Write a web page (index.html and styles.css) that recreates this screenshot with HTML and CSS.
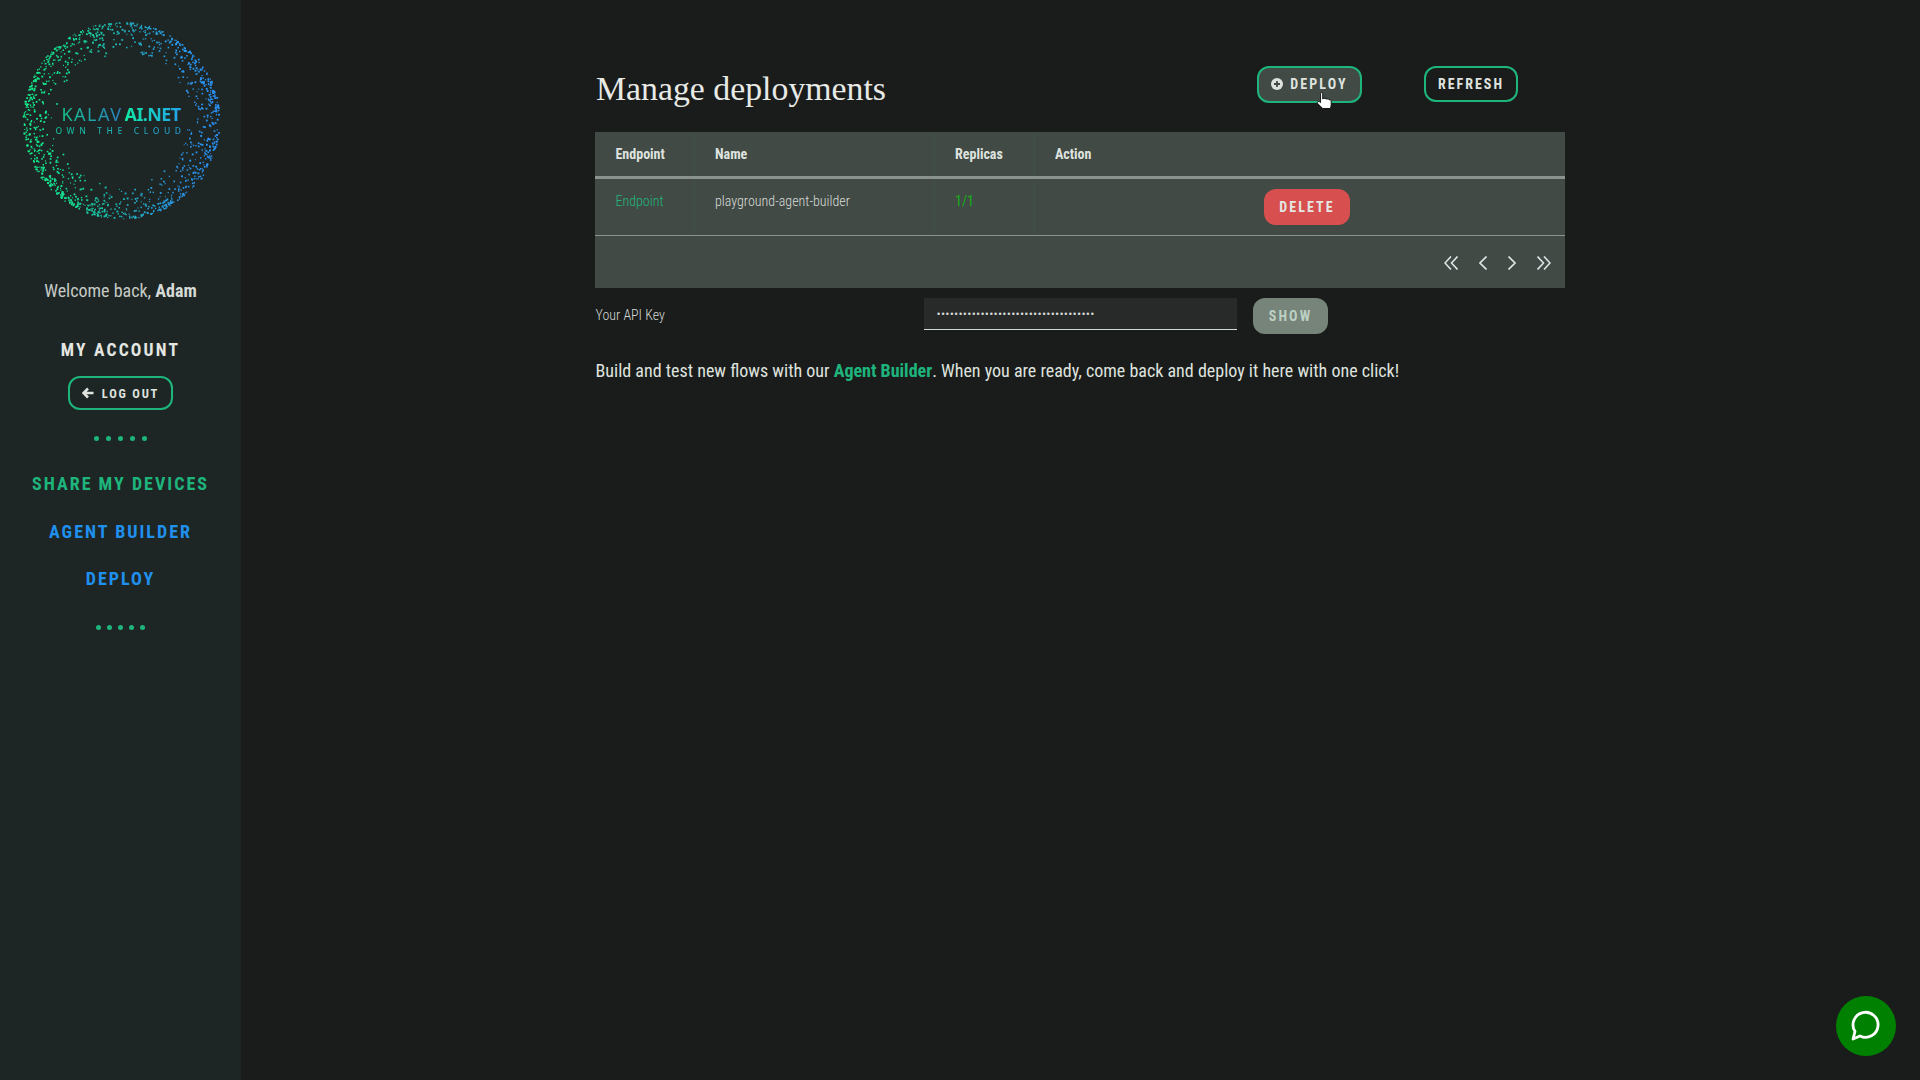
FILE: index.html
```html
<!DOCTYPE html>
<html lang="en">
<head>
<meta charset="utf-8">
<title>Manage deployments</title>
<link rel="stylesheet" href="styles.css">
</head>
<body>
<div class="app">
  <aside class="sidebar">
    <div class="logo">
      <svg id="ring" class="ring" viewBox="0 0 200 200" width="200" height="200" aria-hidden="true">
        <defs>
          <linearGradient id="ringGrad" gradientUnits="userSpaceOnUse" x1="5" y1="100" x2="195" y2="100">
            <stop offset="0" stop-color="#12f08c"/>
            <stop offset="0.25" stop-color="#14dc94"/>
            <stop offset="0.55" stop-color="#22aac0"/>
            <stop offset="0.8" stop-color="#2a98ee"/>
            <stop offset="1" stop-color="#2a92fa"/>
          </linearGradient>
        </defs>
        <g id="ringDots" fill="url(#ringGrad)"></g>
      </svg>
      <div class="logo-text">
        <div class="logo-name"><span class="logo-thin">KALAV</span><span class="logo-bold">AI.NET</span></div>
        <div class="logo-tag">OWN THE CLOUD</div>
      </div>
    </div>
    <p class="welcome">Welcome back, <b>Adam</b></p>
    <h3 class="account">MY ACCOUNT</h3>
    <a class="btn btn-logout"><svg class="arrow" viewBox="0 0 12 12" width="12" height="12"><path d="M6 1.500 1.500 6 6 10.500M2 6h9.500" fill="none" stroke="currentColor" stroke-width="2.600"/></svg>LOG OUT</a>
    <div class="dots dots-a"><i></i><i></i><i></i><i></i><i></i></div>
    <nav class="nav">
      <a class="nav-green">SHARE MY DEVICES</a>
      <a class="nav-blue">AGENT BUILDER</a>
      <a class="nav-blue">DEPLOY</a>
    </nav>
    <div class="dots dots-b"><i></i><i></i><i></i><i></i><i></i></div>
  </aside>
  <main class="main">
    <div class="content">
      <header class="head">
        <h1 class="title">Manage deployments</h1>
        <a class="btn btn-deploy"><svg viewBox="0 0 12 12" width="12" height="12"><circle cx="6" cy="6" r="6" fill="currentColor"/><path d="M6 3v6M3 6h6" stroke="#414a45" stroke-width="1.800"/></svg>DEPLOY</a>
        <a class="btn btn-refresh">REFRESH</a>
      </header>
      <div class="table">
        <div class="row row-head">
          <div class="c c1">Endpoint</div><div class="c c2">Name</div><div class="c c3">Replicas</div><div class="c c4">Action</div>
        </div>
        <div class="row row-body">
          <div class="c c1 ep">Endpoint</div><div class="c c2">playground-agent-builder</div><div class="c c3 rep">1/1</div>
          <div class="c c4"><a class="btn btn-delete">DELETE</a></div>
        </div>
        <div class="pager">
          <svg class="pg-wide" viewBox="0 0 14 14"><path d="M7 .5 1 7l6 6.500M13.500 .5 7.500 7l6 6.500"/></svg>
          <svg class="pg-thin" viewBox="0 0 8 14"><path d="M7.500 .5 1 7l6.500 6.500"/></svg>
          <svg class="pg-thin" viewBox="0 0 8 14"><path d="M.5 .5 7 7l-6.500 6.500"/></svg>
          <svg class="pg-wide" viewBox="0 0 14 14"><path d="M.5 .5 6.500 7l-6 6.500M7 .5 13 7l-6 6.500"/></svg>
        </div>
      </div>
      <div class="api">
        <label class="api-label">Your API Key</label>
        <div class="api-input">••••••••••••••••••••••••••••••••••••</div>
        <a class="btn btn-show">SHOW</a>
      </div>
      <p class="note">Build and test new flows with our <a>Agent Builder</a>. When you are ready, come back and deploy it here with one click!</p>
    </div>
  </main>
</div>
<svg class="cursor" viewBox="0 0 14.500 16" width="16" height="17" aria-hidden="true"><path d="M4 1.500Q4 .5 5 .5T6 1.500V6.500L7 6q1.500-.5 2 .5l1 0q1.500-.3 2 .8q1.800-.3 2 1V12q0 2-1 3.500H6L1.500 11q-1-1.200 0-2 1-.6 2.500 1z" fill="#fff" stroke="#000" stroke-width=".8"/></svg>
<a class="chat"><svg viewBox="1 0 32 32" width="32" height="32"><path d="M4 29l2-7.500A12.500 12.500 0 1 1 11 26z" fill="none" stroke="#fff" stroke-width="2.800" stroke-linejoin="round"/></svg></a>
<script src="logo.js"></script>
</body>
</html>
```
FILE: styles.css
```css
* { box-sizing: border-box; }
html, body { margin: 0; height: 100%; }
body {
  background: #1a1c1c;
  color: #dfe3df;
  font-family: "Roboto Condensed", Roboto, "Liberation Sans", sans-serif;
  font-stretch: 75%;
  overflow: hidden;
}
a { cursor: pointer; }
.app { display: flex; height: 1080px; }
.sidebar {
  width: 241px;
  flex: none;
  background: #1d2625;
  display: flex;
  flex-direction: column;
  align-items: center;
  padding-top: 20px;
}
.logo { position: relative; width: 200px; height: 200px; }
.ring { display: block; }
.logo-text { position: absolute; left: 0; right: 0; top: 84px; text-align: center; }
.logo-name { font-family: "Noto Sans", sans-serif; font-stretch: 100%; font-size: 18px; line-height: 20px; padding-left: 1px; }
.logo-thin {
  font-weight: 400;
  letter-spacing: 1.500px;
  background: linear-gradient(90deg, #16c690, #2a80c0);
  -webkit-background-clip: text;
  background-clip: text;
  color: transparent;
}
.logo-bold {
  font-weight: 700;
  margin-left: 2px;
  letter-spacing: -.6px;
  background: linear-gradient(90deg, #10e8a4, #22a4ee);
  -webkit-background-clip: text;
  background-clip: text;
  color: transparent;
}
.logo-tag {
  font-family: "Noto Sans", sans-serif;
  font-stretch: 100%;
  font-size: 8.500px;
  font-weight: 500;
  line-height: 10px;
  letter-spacing: 4.600px;
  margin-top: 2px;
  background: linear-gradient(90deg, #14c88c, #2a90e0);
  -webkit-background-clip: text;
  background-clip: text;
  color: transparent;
}
.welcome { margin: 59px 0 0; font-size: 18px; line-height: 24px; color: #c6cbc6; }
.welcome b { color: #d6dad6; }
.account { margin: 35px 0 0; font-size: 17.500px; line-height: 24px; letter-spacing: 2.200px; font-weight: 700; color: #e4e6e2; }
.btn {
  display: inline-flex;
  align-items: center;
  justify-content: center;
  border-radius: 12px;
  font-weight: 700;
  letter-spacing: 2.100px;
}
.btn-logout {
  margin-top: 14px;
  width: 105px;
  height: 34px;
  border: 2px solid #1eb57d;
  font-size: 12.500px;
  letter-spacing: 1.800px;
  gap: 8px;
  color: #dfe3df;
}
.dots { display: flex; justify-content: center; }
.dots i { width: 5px; height: 5px; border-radius: 50%; background: #1eb57d; }
.dots-a { margin-top: 26px; gap: 7px; }
.dots-b { margin-top: 33px; gap: 6px; }
.nav { display: flex; flex-direction: column; align-items: center; margin-top: 30px; }
.nav a { font-size: 18px; line-height: 26px; font-weight: 700; letter-spacing: 2px; margin-bottom: 21px; }
.nav a:first-child { margin-bottom: 22px; }
.nav a:last-child { margin-bottom: 0; }
.nav-green { color: #1eb57d; }
.nav-blue { color: #2090ee; }
.main { flex: 1; padding: 66px 0 0 354px; }
.content { width: 970px; }
.head { display: flex; align-items: flex-start; height: 66px; }
.title {
  margin: 0;
  width: 662px;
  padding: 2px 0 0 1px;
  font-family: "Liberation Serif", serif;
  font-stretch: 100%;
  font-weight: 400;
  font-size: 33.800px;
  line-height: 42px;
  color: #e8eae6;
}
.btn-deploy {
  width: 105px;
  height: 37px;
  padding-bottom: 1px;
  border: 2px solid #1eb57d;
  background: #414a45;
  font-size: 14px;
  gap: 7px;
}
.btn-refresh {
  margin-left: 62px;
  width: 94px;
  height: 36px;
  border: 2px solid #1eb57d;
  font-size: 14px;
  letter-spacing: 2px;
}
.table { background: #414a45; }
.row { display: flex; }
.c { padding-left: 20px; border-right: 1px solid #3d534a; }
.c1 { width: 100px; padding-left: 20.500px; }
.c2 { width: 240px; }
.c3 { width: 100px; }
.c4 { flex: 1; border-right: 0; }
.row-head { height: 47px; border-bottom: 3px solid #8a938d; font-size: 14px; font-weight: 700; color: #dfe3df; }
.row-head .c { line-height: 44px; }
.row-body { height: 57px; border-bottom: 1px solid #8a938d; font-size: 14px; font-weight: 300; color: #d8dcd8; }
.row-body .c { padding-top: 12px; line-height: 20px; }
.ep { color: #22b67c; }
.row-body .rep { color: #16b016; font-weight: 400; }
.row-body .c4 { padding-top: 10px; }
.btn-delete {
  margin-left: 209px;
  width: 86px;
  height: 36px;
  background: #d84f4f;
  font-size: 14px;
  color: #e4e6e2;
}
.pager {
  height: 52px;
  display: flex;
  align-items: center;
  justify-content: flex-end;
  gap: 21px;
  padding: 2px 14px 0 0;
}
.pager svg { height: 14px; fill: none; stroke: #dde4e6; stroke-width: 1.600; }
.pg-wide { width: 14px; }
.pg-thin { width: 8px; }
.api { display: flex; align-items: flex-start; margin-top: 10px; }
.api-label { width: 329px; padding: 7px 0 0 .5px; font-size: 14px; font-weight: 300; line-height: 20px; color: #d3d7d3; }
.api-input {
  width: 313px;
  height: 32px;
  padding: 0 13px;
  background: #282a2a;
  border-bottom: 1px solid #cfdcd4;
  font-family: "Liberation Sans", sans-serif;
  font-stretch: 100%;
  font-size: 9px;
  line-height: 32px;
  letter-spacing: 1.240px;
  color: #d5d9d5;
}
.btn-show {
  margin-left: 16px;
  width: 75px;
  height: 36px;
  background: #76847a;
  font-size: 14px;
  color: #bcd0c4;
}
.note { margin: 25px 0 0 .5px; font-size: 18px; line-height: 24px; color: #dfe3df; }
.note a { color: #1eb57d; font-weight: 700; }
.cursor { position: absolute; left: 1316px; top: 92px; }
.chat {
  position: fixed;
  left: 1836px;
  top: 996px;
  width: 60px;
  height: 60px;
  border-radius: 50%;
  background: #008000;
  display: flex;
  align-items: center;
  justify-content: center;
}
```
FILE: logo.js
```js
(function () {
  var g = document.getElementById("ringDots");
  var seed = 12345;
  function rnd() {
    seed = (seed * 16807) % 2147483647;
    return seed / 2147483647;
  }
  var out = "";
  for (var i = 0; i < 1300; i++) {
    var a = rnd() * Math.PI * 2;
    var spread = Math.pow(rnd(), 3);
    var r = 98.500 - spread * 27 - rnd() * rnd() * 10;
    var x = 100 + r * Math.cos(a);
    var y = 100 + r * Math.sin(a);
    var s = 1 + rnd() * 0.9;
    out += '<rect x="' + x.toFixed(1) + '" y="' + y.toFixed(1) + '" width="' + s.toFixed(1) + '" height="' + s.toFixed(1) + '"/>';
  }
  g.innerHTML = out;
})();
```
